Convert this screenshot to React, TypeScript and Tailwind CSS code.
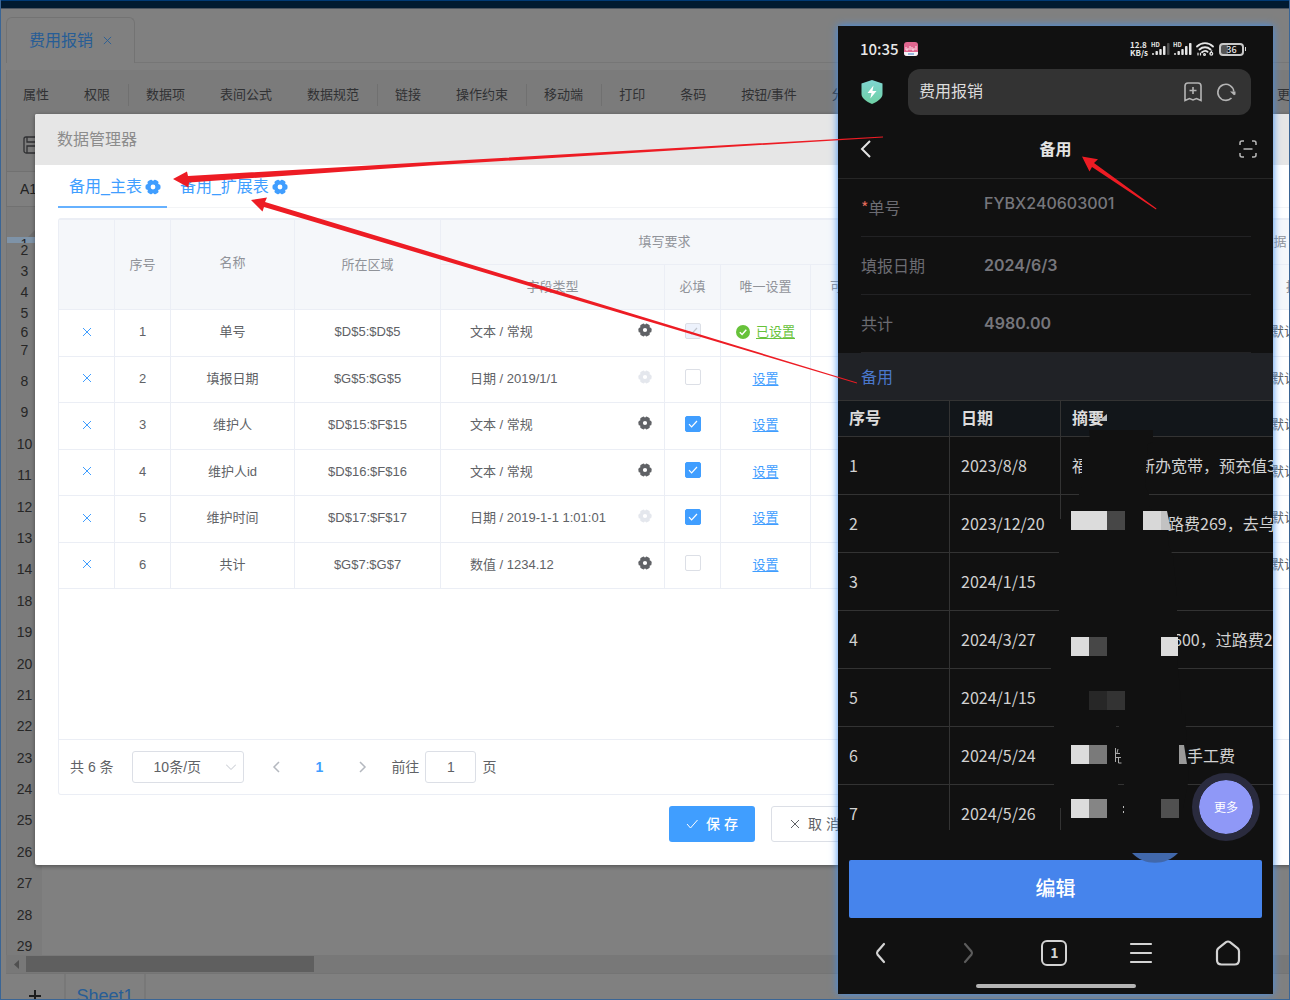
import { ReactNode } from "react";

const menus = [
  { label: "属性" },
  { label: "权限", divider: true },
  { label: "数据项" },
  { label: "表间公式" },
  { label: "数据规范", divider: true },
  { label: "链接" },
  { label: "操作约束", divider: true },
  { label: "移动端", divider: true },
  { label: "打印" },
  { label: "条码" },
  { label: "按钮/事件" },
  { label: "分析" },
];

const topRows = [
  { n: 1, h: "h-[6px]" },
  { n: 2, h: "h-[21px]" },
  { n: 3, h: "h-[21px]" },
  { n: 4, h: "h-[21px]" },
  { n: 5, h: "h-[19px]" },
  { n: 6, h: "h-[18px]" },
  { n: 7, h: "h-[31px]" },
];

const sheetRows = [8, 9, 10, 11, 12, 13, 14, 18, 19, 20, 21, 22, 23, 24, 25, 26, 27, 28];

const fields = [
  { name: "单号", area: "$D$5:$D$5", type: "文本 / 常规", gear: true, required: true, locked: true, unique: true },
  { name: "填报日期", area: "$G$5:$G$5", type: "日期 / 2019/1/1", gear: false, required: false },
  { name: "维护人", area: "$D$15:$F$15", type: "文本 / 常规", gear: true, required: true },
  { name: "维护人id", area: "$D$16:$F$16", type: "文本 / 常规", gear: true, required: true },
  { name: "维护时间", area: "$D$17:$F$17", type: "日期 / 2019-1-1 1:01:01", gear: false, required: true },
  { name: "共计", area: "$G$7:$G$7", type: "数值 / 1234.12", gear: true, required: false },
];

function Gear({ className = "" }: { className?: string }) {
  return (
    <svg viewBox="0 0 16 16" className={className} aria-hidden="true">
      <circle cx="8" cy="8" r="4.3" fill="none" stroke="currentColor" strokeWidth="3.8" />
      {[0, 60, 120, 180, 240, 300].map((a) => (
        <rect
          key={a}
          x="11.5"
          y="5.2"
          width="4"
          height="5.6"
          rx="1.8"
          fill="currentColor"
          transform={`rotate(${a} 8 8)`}
        />
      ))}
    </svg>
  );
}

function Cross({ className = "" }: { className?: string }) {
  return (
    <svg viewBox="0 0 10 10" className={className} fill="none" stroke="currentColor" aria-hidden="true">
      <path d="M1 1l8 8M9 1L1 9" />
    </svg>
  );
}

function Th({ children, className = "", ...rest }: { children?: ReactNode; className?: string; colSpan?: number; rowSpan?: number }) {
  return (
    <th className={`border-r border-b border-[#ebeef5] bg-[#f5f7fa] p-0 text-center font-normal text-[#909399] ${className}`} {...rest}>
      {children}
    </th>
  );
}

function Td({ children, className = "pb-[2px]" }: { children?: ReactNode; className?: string }) {
  return <td className={`border-r border-b border-[#ebeef5] px-0 pt-0 text-center ${className}`}>{children}</td>;
}

function Check({ checked, disabled, label }: { checked: boolean; disabled?: boolean; label: string }) {
  return (
    <label className="relative mx-auto block size-4">
      <input
        type="checkbox"
        defaultChecked={checked}
        disabled={disabled}
        aria-label={label}
        className="block size-4 appearance-none rounded-xs border border-[#dcdfe6] bg-white checked:border-[#409eff] checked:bg-[#409eff] disabled:border-[#dcdfe6] disabled:bg-[#edf2fc]"
      />
      {checked && (
        <svg
          viewBox="0 0 16 16"
          fill="none"
          stroke="currentColor"
          className={`pointer-events-none absolute inset-0 size-4 ${disabled ? "text-[#c0c4cc]" : "text-white"}`}
        >
          <path d="M4 8.2l2.6 2.7L12 5" strokeWidth="1.2" />
        </svg>
      )}
    </label>
  );
}

function Designer() {
  return (
    <div className="flex h-full flex-col border-b border-l border-[#3a6595] bg-[#808080] pl-[5px]">
      <div className="-ml-[5px] h-[9px] shrink-0 border-t border-b border-t-[#003a75] border-b-[#4c5560] bg-[#001a30]" />
      <div className="flex h-[54px] shrink-0 items-end border-b border-[#767676] pb-0">
        <div className="-mb-px flex h-[46px] items-center gap-[10px] rounded-t-md border border-b-0 border-[#737373] bg-[#808080] px-[22px] text-base text-[#275d96]">
          费用报销
          <button aria-label="关闭">
            <Cross className="size-[9px]" />
          </button>
        </div>
      </div>
      <nav className="mt-[7px] flex h-[49px] shrink-0 items-center border-l border-[#757575] bg-[#7b7b7b] text-[13px] text-[#303133]">
        {menus.map((m) => (
          <button
            key={m.label}
            className={`h-[22px] shrink-0 border-r pr-[18px] pl-4 whitespace-nowrap ${m.divider ? "mr-px border-[#707070]" : "border-transparent"}`}
          >
            {m.label}
          </button>
        ))}
        <button className="mr-[-13px] ml-auto shrink-0">更多</button>
      </nav>
      <div className="flex h-[53px] shrink-0 items-center border-b border-l border-[#717171] bg-[#7b7b7b] pl-4">
        <svg viewBox="0 0 18 18" className="size-[18px] text-[#303133]" fill="none" stroke="currentColor" strokeWidth="1.3">
          <path d="M3 1h11l3 3v13H3a2 2 0 0 1-2-2V3a2 2 0 0 1 2-2zM4 1v5h9V1M4 17v-7h10v7" />
        </svg>
      </div>
      <div className="flex h-[35px] shrink-0 items-center border-b border-l border-[#717171] bg-[#7f7f7f] pl-[13px] text-sm text-[#222]">A1</div>
      <div className="flex h-[30px] shrink-0 items-end border-l border-[#757575] bg-[#7b7b7b] pl-[21px]">
        <svg viewBox="0 0 8 8" className="size-[7px] text-[#6e6e6e]">
          <path d="M8 0v8H0z" fill="currentColor" />
        </svg>
      </div>
      <div className="flex min-h-0 flex-1 flex-col">
        <div className="flex min-h-0 w-[36px] flex-1 flex-col border-l border-[#757575] bg-[#7b7b7b] text-center text-sm leading-[14px] text-[#262626]">
          {topRows.map((r) => (
            <div key={r.n} className={`shrink-0 ${r.h} ${r.n === 1 ? "overflow-hidden bg-[#7e93a8]" : ""}`}>
              {r.n}
            </div>
          ))}
          {sheetRows.map((n) => (
            <div key={n} className="min-h-0 flex-1">
              {n}
            </div>
          ))}
          <div className="h-[16px] shrink-0">29</div>
        </div>
      </div>
      <div className="flex h-[19px] shrink-0 items-center gap-[7px] border-b border-[#747474] bg-[#787878] pl-2">
        <svg viewBox="0 0 5 9" className="h-[9px] w-[5px] text-[#505050]">
          <path d="M5 0v9L0 4.500z" fill="currentColor" />
        </svg>
        <div className="h-4 w-[288px] bg-[#5f5f5f]" />
      </div>
      <div className="flex h-[25px] shrink-0 overflow-hidden">
        <button aria-label="新增" className="flex w-[60px] justify-center border-r-2 border-[#787878] pt-4 text-[#1c1c1c]">
          <svg viewBox="0 0 12 12" className="size-3" stroke="currentColor" strokeWidth="2">
            <path d="M6 0v12M0 6h12" />
          </svg>
        </button>
        <button className="w-[80px] border-r-2 border-[#787878] pt-2 text-lg text-[#275d96]">Sheet1</button>
      </div>
    </div>
  );
}

function FieldTable() {
  return (
    <table className="h-[369px] w-full table-fixed border-separate border-spacing-0 text-[13px] text-[#606266]">
      <colgroup>
        <col className="w-[56px]" />
        <col className="w-[56px]" />
        <col className="w-[124px]" />
        <col className="w-[146px]" />
        <col className="w-[224px]" />
        <col className="w-[56px]" />
        <col className="w-[90px]" />
        <col className="w-[78px]" />
        <col className="w-[166px]" />
        <col className="w-[103px]" />
        <col />
      </colgroup>
      <thead>
        <tr className="h-[45px]">
          <Th rowSpan={2} />
          <Th rowSpan={2}>序号</Th>
          <Th rowSpan={2} className="pb-[3px]">
            名称
          </Th>
          <Th rowSpan={2}>所在区域</Th>
          <Th colSpan={4}>填写要求</Th>
          <Th rowSpan={2} />
          <Th colSpan={2}>初始数据</Th>
        </tr>
        <tr className="h-[45px]">
          <Th>字段类型</Th>
          <Th>必填</Th>
          <Th>唯一设置</Th>
          <Th>可编辑</Th>
          <Th />
          <Th>提取方式</Th>
        </tr>
      </thead>
      <tbody>
        {fields.map((f, i) => (
          <tr key={f.area} className="h-[46px]">
            <Td className="pb-1">
              <button aria-label={`删除${f.name}`} className="align-middle text-[#409eff]">
                <Cross className="size-[10px]" />
              </button>
            </Td>
            <Td>{i + 1}</Td>
            <Td>{f.name}</Td>
            <Td>{f.area}</Td>
            <Td>
              <div className="flex items-center justify-between pr-3 pl-[29px]">
                <span>{f.type}</span>
                <button aria-label={`${f.name}格式`} disabled={!f.gear} className="pb-[3px]">
                  <Gear className={`size-[14px] ${f.gear ? "text-[#606266]" : "text-[#e4e7ed]"}`} />
                </button>
              </div>
            </Td>
            <Td className="pb-[4px]">
              <Check checked={f.required} disabled={f.locked} label={`${f.name}必填`} />
            </Td>
            <Td>
              {f.unique ? (
                <div className="flex items-center justify-center gap-[6px] text-[#67c23a]">
                  <svg viewBox="0 0 14 14" className="size-[14px]">
                    <circle cx="7" cy="7" r="7" fill="currentColor" />
                    <path d="M3.800 7.200l2.300 2.300 4.200-4.800" fill="none" stroke="#fff" strokeWidth="1.400" />
                  </svg>
                  <a href="#unique" className="underline underline-offset-2">
                    已设置
                  </a>
                </div>
              ) : (
                <a href="#unique" className="text-[#409eff] underline underline-offset-2">
                  设置
                </a>
              )}
            </Td>
            <Td />
            <Td />
            <Td />
            <Td>
              <div className="pl-[113px] text-left">默认</div>
            </Td>
          </tr>
        ))}
      </tbody>
    </table>
  );
}

function Pager() {
  return (
    <div className="flex h-[55px] items-center border-t border-[#ebeef5] pl-[11px] text-sm text-[#606266]">
      <span>共 6 条</span>
      <div className="relative ml-[18px]">
        <select aria-label="每页条数" className="block h-8 w-[112px] appearance-none rounded-[3px] border border-[#dcdfe6] pl-[21px]">
          <option>10条/页</option>
        </select>
        <svg
          viewBox="0 0 10 6"
          className="pointer-events-none absolute top-[13px] right-2 h-[6px] w-[10px] text-[#c0c4cc]"
          fill="none"
          stroke="currentColor"
        >
          <path d="M0 .5l5 5 5-5" />
        </svg>
      </div>
      <button aria-label="上一页" className="ml-7 text-[#b4b8bf]">
        <svg viewBox="0 0 8 12" className="h-3 w-2" fill="none" stroke="currentColor" strokeWidth="1.5">
          <path d="M7 1L2 6l5 5" />
        </svg>
      </button>
      <button className="ml-9 font-bold text-[#409eff]">1</button>
      <button aria-label="下一页" className="ml-9 text-[#b4b8bf]">
        <svg viewBox="0 0 8 12" className="h-3 w-2" fill="none" stroke="currentColor" strokeWidth="1.5">
          <path d="M1 1l5 5-5 5" />
        </svg>
      </button>
      <label className="ml-6 flex items-center gap-[6px]">
        前往
        <input defaultValue="1" className="h-8 w-[51px] rounded-[3px] border border-[#dcdfe6] text-center" />
        页
      </label>
    </div>
  );
}

function ManagerDialog() {
  return (
    <section className="w-[1456px] rounded-xs bg-white pb-[23px] shadow-[0_1px_4px_rgba(0,0,0,0.4)]">
      <header className="flex h-[51px] items-center rounded-t-xs bg-[#e6e6e6] pl-[22px] text-base text-[#8c8c8c]">数据管理器</header>
      <div className="px-[23px]">
        <div className="flex h-[43px] border-b border-[#f3f4f6] text-base text-[#409eff]">
          <button className="-mb-px flex items-center gap-[3px] border-b-2 border-[#66b1ff] pt-[2px] pr-[6px] pl-[11px]">
            备用_主表
            <Gear className="size-4" />
          </button>
          <button className="flex items-center gap-[3px] pt-px pl-[13px]">
            备用_扩展表
            <Gear className="size-4" />
          </button>
        </div>
        <div className="mt-[10px] rounded-[3px] border border-t-2 border-[#ebeef5]">
          <div className="h-[519px] overflow-hidden">
            <FieldTable />
          </div>
          <Pager />
        </div>
        <div className="mt-[11px] flex justify-center gap-4 text-sm">
          <button className="flex h-9 w-[86px] items-center justify-center gap-2 rounded-[3px] bg-[#409eff] font-medium text-white">
            <svg viewBox="0 0 12 10" className="h-[10px] w-3" fill="none" stroke="currentColor">
              <path d="M1 5l3.500 4L11.500 1" />
            </svg>
            保 存
          </button>
          <button className="flex h-9 w-[86px] items-center justify-center gap-2 rounded-[3px] border border-[#dcdfe6] pl-[2px] text-[#606266]">
            <Cross className="size-[10px]" />
            取 消
          </button>
        </div>
      </div>
    </section>
  );
}

function SignalBars({ weak }: { weak?: boolean }) {
  return (
    <svg viewBox="0 0 19 14" className="h-[14px] w-[19px]" fill="#e6e6e6">
      <text x="0" y="5" fontSize="6" fontWeight="700">
        HD
      </text>
      <rect x="1" y="11" width="2" height="2" rx="1" />
      <rect x="4.500" y="9" width="2.400" height="4" rx=".8" />
      <rect x="8.300" y="7" width="2.400" height="6" rx=".8" />
      <rect x="12" y="4" width="2.500" height="9" rx=".8" />
      <rect x="16" y="1" width="2.500" height="12" rx=".8" fill={weak ? "#4a4a4a" : "#e6e6e6"} />
    </svg>
  );
}

function StatusBar() {
  return (
    <div className="flex h-[43px] shrink-0 items-center pt-[3px] pr-[27px] pl-[22px] text-[#e8e8e8]">
      <span className="text-[15px] font-medium">10:35</span>
      <svg viewBox="0 0 14 14" className="ml-[5px] size-[14px]">
        <rect width="14" height="14" rx="3" fill="#e0668f" />
        <path d="M0 10h14v1a3 3 0 0 1-3 3H3a3 3 0 0 1-3-3z" fill="#f4f4f8" />
        <path d="M4 12h6" stroke="#5a8fd0" strokeWidth="1.200" />
        <path d="M2 5v3h2V6M6 4v4M8 5v3h2V6M12 4v4" stroke="#fbe3ea" fill="none" />
      </svg>
      <div className="ml-auto flex items-center gap-[3px]">
        <span className="text-[8px] leading-[8px] font-bold">
          12.8
          <br />
          KB/s
        </span>
        <SignalBars weak />
        <SignalBars />
        <svg viewBox="0 0 18 14" className="ml-px h-[14px] w-[18px]" fill="none" stroke="#e6e6e6" strokeWidth="1.800" strokeLinecap="round">
          <path d="M1 4.500c4.500-4.500 11.500-4.500 16 0M3.500 7.500c3.200-3 7.800-3 11 0M6 10.200c2-1.700 4-1.700 5.500-.4" />
          <path d="M2 11v2M4.500 11v2" strokeWidth="1.200" />
          <circle cx="8.500" cy="12.500" r=".6" />
          <path d="M15.800 8.800l-1.500 2.400" strokeWidth="1.200" />
          <circle cx="15.300" cy="11.800" r="1.400" strokeWidth="1.200" />
        </svg>
        <div className="ml-[2px] flex items-center gap-px">
          <span className="flex h-[13px] w-[25px] items-center justify-center rounded-[4px] border-2 border-[#c8c8c8] bg-linear-to-r from-[#555] from-35% to-transparent to-35% text-[9px] leading-none font-medium">
            36
          </span>
          <span className="h-1 w-px bg-[#d8d8d8]" />
        </div>
      </div>
    </div>
  );
}

function InfoRow({ label, value, required }: { label: string; value: string; required?: boolean }) {
  return (
    <div className="flex h-[58px] shrink-0 items-center border-b border-[#222224] pb-[2px]">
      <dt className="w-[123px] text-base text-[#6c6c72]">
        {required && <span className="text-[#e06a5a]">*</span>}
        {label}
      </dt>
      <dd className={`font-['Inter'] text-base text-[#76767c] ${required ? "-mt-2 font-medium" : "font-semibold"}`}>{value}</dd>
    </div>
  );
}

const records: { date: string; summary: ReactNode }[] = [
  {
    date: "2023/8/8",
    summary: (
      <>
        <span className="w-[67px] shrink-0">福</span>
        <span>新办宽带，预充值3</span>
      </>
    ),
  },
  { date: "2023/12/20", summary: <span className="pl-[96px]">路费269，去乌</span> },
  { date: "2024/1/15", summary: null },
  { date: "2024/3/27", summary: <span className="pl-[101px]">600，过路费2</span> },
  { date: "2024/1/15", summary: null },
  { date: "2024/5/24", summary: <span className="pl-[115px]">手工费</span> },
  { date: "2024/5/26", summary: null },
];

// Blacked-out areas plus the pixel blocks left in the summary column.
function Redactions() {
  return (
    <svg viewBox="0 0 436 430" className="pointer-events-none absolute top-0 left-0 h-[430px] w-[436px]">
      <path
        fill="#111"
        d="M251 30h64v12l-5 2-3 42 4 8v12l18 26 2 14 4 10 4 40v58l5 60h3l4 64-6 30H221v-17h-5v-90h-3v-40h8V119h4v-20h16v-8l3-4V42h8z"
      />
      {/* fragments that survive between the blacked-out strokes */}
      <path fill="#333" d="M278 326h3v1h-3zM280 384h6v1h-6z" />
      <path fill="none" stroke="#aaa" d="M277.500 348v14M277 353.500h5M280 349l-1 4M278 357.500h5M280.500 358v5h3" />
      <path fill="none" stroke="#bbb" strokeDasharray="2 3" d="M285.500 406v10" />
      <path fill="#b9bcbe" d="M258 15l5 4 6-5v7h-11z" />
      <g shapeRendering="crispEdges">
        <path fill="#dcdcdc" d="M233 111h36v19h-36zM233 237h18v19h-18zM323 237h17v19h-17zM233 345h18v19h-18zM233 399h18v19h-18z" />
        <path fill="#d8d8d8" d="M305 111h18v19h-18z" />
        <path fill="#474747" d="M269 111h18v19h-18zM251 237h18v19h-18z" />
        <path fill="#272727" d="M251 291h18v19h-18z" />
        <path fill="#333" d="M269 291h18v19h-18z" />
        <path fill="#7a7a7a" d="M251 345h18v19h-18z" />
        <path fill="#858585" d="M251 399h18v19h-18z" />
        <path fill="#505050" d="M323 399h18v19h-18z" />
      </g>
      <path fill="#c2c2c2" d="M323 111h6l4 19h-10z" />
      <path fill="#9a9a9a" d="M341 345h5l3 19h-8z" />
      <path fill="#333" d="M222 416h1v14h-1z" />
    </svg>
  );
}

function Phone() {
  return (
    <div className="flex h-full w-[435px] flex-col overflow-hidden bg-[#111] font-['Noto_Sans_CJK_SC',sans-serif] shadow-[0_0_8px_#3f8ff0]">
      <StatusBar />
      <div className="flex h-[46px] shrink-0 items-center pr-[22px] pl-[23px]">
        <svg viewBox="0 0 22 24" className="h-6 w-[22px]">
          <defs>
            <linearGradient id="shield" x1="0" y1="0" x2="0" y2="1">
              <stop offset="0" stopColor="#7fd6d2" />
              <stop offset="1" stopColor="#6ed0a4" />
            </linearGradient>
          </defs>
          <path d="M11 0l10.500 3.500V14c0 4-4.500 7.500-10.500 10C5 21.500.5 18 .5 14V3.500z" fill="url(#shield)" />
          <path d="M12.500 5.500L6.500 13h4l-1.200 5.500L15.500 11h-4z" fill="#fff" />
        </svg>
        <div className="ml-[25px] flex h-[46px] flex-1 items-center rounded-xl bg-[#333] pr-[15px] pl-[11px] text-[#dcdcdc]">
          <input aria-label="地址栏" defaultValue="费用报销" className="min-w-0 flex-1 pb-1 text-base" />
          <button aria-label="收藏">
            <svg viewBox="0 0 18 20" className="h-5 w-[18px] text-[#b4b4b4]" fill="none" stroke="currentColor" strokeWidth="1.600">
              <path d="M4 1h10a3 3 0 0 1 3 3v14.500l-4.500-2L9 18l-3.500-1.500-4.500 2V4a3 3 0 0 1 3-3zM9 5v7M5.500 8.500h7" />
            </svg>
          </button>
          <button aria-label="刷新" className="ml-[14px]">
            <svg viewBox="0 0 20 20" className="size-5 text-[#b4b4b4]" fill="none" stroke="currentColor" strokeWidth="1.600">
              <path d="M15.500 16a8 8 0 1 1 2.300-6.500" />
              <path d="M14 9.500h5.500v3l-1.500.8z" fill="currentColor" stroke="none" />
            </svg>
          </button>
        </div>
      </div>
      <div className="mt-[4px] grid h-[60px] shrink-0 grid-cols-[1fr_auto_1fr] items-center border-b border-[#262626] px-4 text-[#e4e4e4]">
        <button aria-label="返回" className="ml-[6px] justify-self-start">
          <svg viewBox="0 0 18 18" className="size-[18px]" fill="none" stroke="currentColor" strokeWidth="2">
            <path d="M10 1L2 9l8 8" />
          </svg>
        </button>
        <h1 className="pb-[2px] text-base font-bold">备用</h1>
        <button aria-label="扫一扫" className="justify-self-end">
          <svg viewBox="0 0 18 18" className="size-[18px]" fill="none" stroke="#b8b8b8" strokeWidth="1.500">
            <path d="M1 5V3a2 2 0 0 1 2-2h2M13 1h2a2 2 0 0 1 2 2v2M17 13v2a2 2 0 0 1-2 2h-2M5 17H3a2 2 0 0 1-2-2v-2M4.500 9h9" />
          </svg>
        </button>
      </div>
      <dl className="shrink-0 pr-[22px] pl-[23px]">
        <InfoRow label="单号" value="FYBX240603001" required />
        <InfoRow label="填报日期" value="2024/6/3" />
        <InfoRow label="共计" value="4980.00" />
      </dl>
      <div className="flex h-[47px] shrink-0 items-center bg-[#202226] pb-[2px] pl-[23px] text-base text-[#4a78cc]">备用</div>
      <div className="relative h-[430px] shrink-0 overflow-hidden">
        <table className="w-full table-fixed border-separate border-spacing-0 text-left text-base text-[#d2d2d2]">
          <colgroup>
            <col className="w-[112px]" />
            <col className="w-[111px]" />
            <col />
          </colgroup>
          <thead>
            <tr className="h-[37px] bg-[#12161a] text-[#dcdcdc]">
              <th className="border-y border-r border-[#333] pt-0 pr-0 pb-[3px] pl-[11px]">序号</th>
              <th className="border-y border-r border-[#333] pt-0 pr-0 pb-[3px] pl-[11px]">日期</th>
              <th className="border-y border-[#333] pt-0 pr-0 pb-[3px] pl-[11px]">摘要</th>
            </tr>
          </thead>
          <tbody>
            {records.map((r, i) => (
              <tr key={i} className="h-[58px]">
                <td className="border-r border-b border-[#333] pt-0 pr-0 pb-[2px] pl-[11px]">{i + 1}</td>
                <td className="border-r border-b border-[#333] pt-0 pr-0 pb-[2px] pl-[11px]">{r.date}</td>
                <td className="border-b border-[#333] pt-0 pr-0 pb-[2px] pl-[11px]">
                  <div className="flex overflow-hidden whitespace-nowrap">{r.summary}</div>
                </td>
              </tr>
            ))}
          </tbody>
        </table>
        <Redactions />
      </div>
      <div className="relative mt-[30px] shrink-0 px-[11px]">
        <button className="block h-[58px] w-full rounded-xs bg-[#4684ec] pb-[2px] text-xl font-medium text-white">编辑</button>
        <svg viewBox="0 0 46 11" className="absolute -top-[7px] right-[95px] h-[11px] w-[46px]">
          <path d="M0 0h46c-12 13-34 13-46 0z" fill="#4168ab" />
        </svg>
        <button className="absolute -top-[87px] right-[13px] size-[68px] rounded-full border-[7px] border-[#2a2b3e] bg-[#8f98f7] bg-clip-padding text-xs text-white">
          更多
        </button>
      </div>
      <nav className="grid h-[70px] shrink-0 grid-cols-5 items-center justify-items-center pr-[2px] text-[#d4d4d4]">
        <button aria-label="后退">
          <svg viewBox="0 0 26 26" className="size-[26px]" fill="none" stroke="currentColor" strokeWidth="2.200" strokeLinecap="round">
            <path d="M16 4l-6.500 7.500q-1 1.500 0 3L16 22" />
          </svg>
        </button>
        <button aria-label="前进" className="text-[#5c5c5c]">
          <svg viewBox="0 0 26 26" className="size-[26px]" fill="none" stroke="currentColor" strokeWidth="2.200" strokeLinecap="round">
            <path d="M10 4l6.500 7.500q1 1.500 0 3L10 22" />
          </svg>
        </button>
        <button className="flex size-[26px] items-center justify-center rounded-md border-2 border-[#d4d4d4] pb-[2px] text-sm leading-none font-bold">1</button>
        <button aria-label="菜单">
          <svg viewBox="0 0 26 26" className="size-[26px]" fill="none" stroke="currentColor" strokeWidth="2.200" strokeLinecap="round">
            <path d="M3 4h20M3 13h20M3 22h20" />
          </svg>
        </button>
        <button aria-label="主页">
          <svg viewBox="0 0 26 26" className="size-[26px]" fill="none" stroke="currentColor" strokeWidth="2.200" strokeLinejoin="round">
            <path d="M11 2.200q2-1.400 4 0l7.500 6q1.500 1.300 1.500 3V20q0 4.500-4.500 4.500h-13Q2 24.500 2 20v-8.800q0-1.700 1.500-3z" />
          </svg>
        </button>
      </nav>
      <div className="mx-auto mt-[-4px] h-1 w-40 shrink-0 rounded-full bg-[#b5b5b5]" />
    </div>
  );
}

function Arrows() {
  return (
    <svg viewBox="0 0 1290 1000" className="pointer-events-none absolute top-0 right-0 h-[1000px] w-[1290px]" fill="#ed1c24">
      <path d="M173 179l14-7.500 1 4.500L430 162l453-25.600v1L430 165.500 189 182.500l-.5 5z" />
      <path d="M251 200l16-2.500-2 4.500 165 50 427 130.500v1L430 256.500 264 207l-1.500 4.500z" />
      <path d="M1082 156.500l16 2.800-4 3.800 62.500 45.500-.5.800L1092 167l-2.500 4.500z" />
    </svg>
  );
}

export default function App() {
  return (
    <div className="relative h-screen overflow-hidden font-['Liberation_Sans','Noto_Sans_CJK_SC',sans-serif]">
      <Designer />
      <div className="absolute inset-0 overflow-hidden pt-[114px] pl-[35px]">
        <ManagerDialog />
      </div>
      <div className="absolute top-[26px] right-[17px] bottom-[6px]">
        <Phone />
      </div>
      <Arrows />
      <div className="pointer-events-none absolute inset-y-0 right-0 w-px bg-[#3a6595]" />
    </div>
  );
}
